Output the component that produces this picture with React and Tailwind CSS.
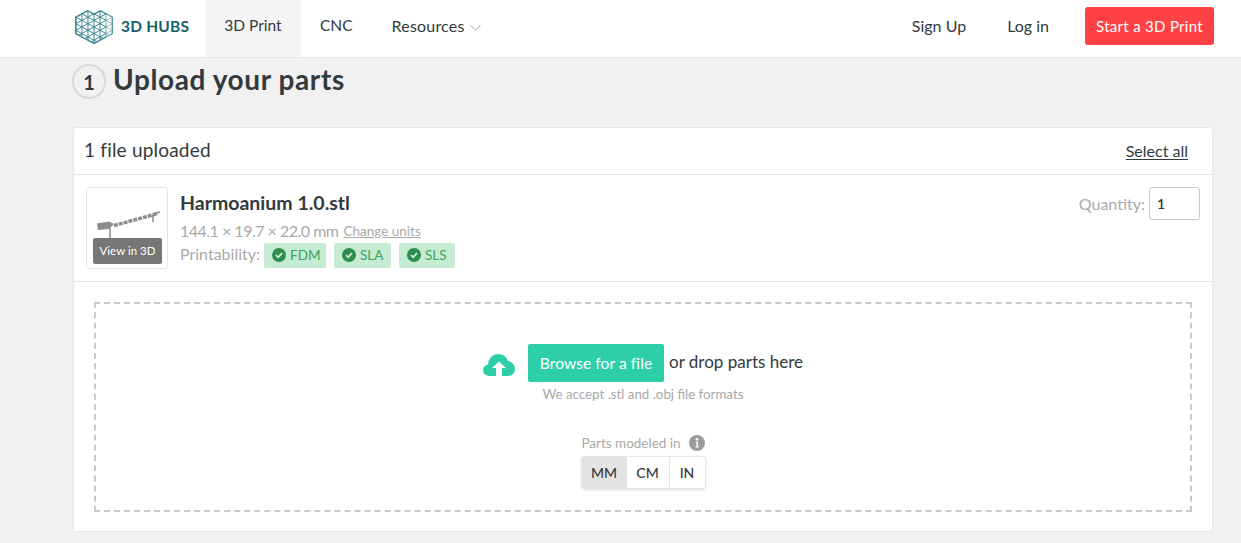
const font = { fontFamily: '"Lato", "Liberation Sans", sans-serif' };

// triangular lattice clipped to the two-lobed hexagon of the mark
function Logo() {
  const outline = "M0.8 7.5L12.7 0.8L19 4.4L25.3 0.8L37.2 7.5V25L19 35.4L0.8 25Z";
  const verticals = [0, 1, 2, 3, 4, 5, 6].map((i) => `M${0.8 + i * 6.07} 0V36`);
  const diagonals = [];
  for (let c = -28; c < 42; c += 7) {
    diagonals.push(`M0 ${c}L38 ${c + 21.9}`);
    diagonals.push(`M0 ${c + 21.9}L38 ${c}`);
  }
  return (
    <svg width="38" height="34" viewBox="0 0 38 36" preserveAspectRatio="none" fill="none" stroke="#3a8791" strokeWidth="1">
      <clipPath id="hex">
        <path d={outline} />
      </clipPath>
      <g clipPath="url(#hex)">
        {verticals.concat(diagonals).map((d) => (
          <path key={d} d={d} />
        ))}
      </g>
      <path d={outline} strokeWidth="1.5" />
      <path d="M31 4V29L37.2 25V7.5Z" fill="#ffffff" fillOpacity="0.45" stroke="none" />
    </svg>
  );
}

function Badge({ label, className }) {
  return (
    <span className={`flex h-[25px] items-center gap-[4px] rounded-[2px] bg-[#c5ebd2] pl-2 text-[13.5px] text-[#3da15f] ${className}`}>
      <svg width="14" height="14" viewBox="0 0 14 14">
        <circle cx="7" cy="7" r="7" fill="#2d8f4e" />
        <path d="M4 7.200L6.200 9.300L10 5" fill="none" stroke="#d6f2e0" strokeWidth="1.800" />
      </svg>
      {label}
    </span>
  );
}

function Part() {
  return (
    <svg width="72" height="34" viewBox="0 0 72 34" fill="none" className="absolute left-[9px] top-[22px]">
      <path d="M18 15.500L62 3.500" stroke="#8c8c8c" strokeWidth="3.500" strokeDasharray="4 1" />
      <path d="M58 3.500L64 2" stroke="#8c8c8c" strokeWidth="1.500" />
      <path d="M1 13.500L13 11.500L18 14L13 19L2 20Z" fill="#8c8c8c" />
      <path d="M14 18V33M57 5V12" stroke="#8c8c8c" strokeWidth="1.500" />
    </svg>
  );
}

export default function App() {
  return (
    <div style={font} className="h-[543px] overflow-hidden bg-[#f1f1f1] text-[#333a3d]">
      <header className="flex h-[58px] border-b border-[#e6e6e6] bg-white pl-[75px] pr-[27px]">
        <div className="flex w-[130px] items-center gap-[8px] pb-[4px]">
          <Logo />
          <span className="text-[15.5px] font-bold tracking-[0.2px] text-[#13606b]">3D HUBS</span>
        </div>
        <nav className="flex text-[15.5px]">
          <a className="flex w-[96px] items-center justify-center bg-[#f5f5f5] pb-[5px]">3D Print</a>
          <a className="ml-[19px] flex items-center pb-[5px]">CNC</a>
          <a className="ml-[39px] flex items-center pb-[5px] text-[16px] tracking-[0.2px]">
            Resources
            <svg width="11" height="6" viewBox="0 0 11 6" fill="none" stroke="#a8a8a8" className="ml-[5px] mt-[3px]">
              <path d="M0.5 0.5L5.5 5L10.5 0.5" />
            </svg>
          </a>
        </nav>
        <div className="ml-auto flex items-center pb-[5px] text-[16px]">
          <a>Sign Up</a>
          <a className="ml-[41px]">Log in</a>
          <a className="ml-[36px] flex h-[38px] w-[129px] items-center justify-center rounded-[3px] bg-[#ff4146] text-[15px] tracking-[0.3px] text-white">
            Start a 3D Print
          </a>
        </div>
      </header>

      <main className="ml-[72px] w-[1141px]">
        <div className="flex h-[69px] items-start pt-[6px]">
          <span className="flex h-[35px] w-[34px] items-center justify-center rounded-full border-2 border-[#d9d9d9] text-[20px] font-bold">1</span>
          <h1 className="ml-[7px] text-[28px] font-bold leading-[31px] tracking-[0.6px]">Upload your parts</h1>
        </div>

        <section className="ml-px h-[405px] rounded-[3px] border border-[#e6e6e6] bg-white">
          <div className="flex h-[47px] items-center justify-between border-b border-[#e4e4e4] pl-[10px] pr-[24px]">
            <span className="mb-[2px] text-[19px] tracking-[0.2px]">1 file uploaded</span>
            <a className="text-[16px] underline underline-offset-2">Select all</a>
          </div>

          <div className="flex h-[107px] border-b border-[#e4e4e4] pl-[12px] pr-[12px] pt-[12px]">
            <div className="relative h-[82px] w-[82px] rounded-[3px] border border-[#e4e4e4]">
              <Part />
              <span className="absolute bottom-[4px] left-[6px] flex h-[26px] w-[69px] items-center justify-center rounded-[2px] bg-[#767676] text-[11.5px] text-white">
                View in 3D
              </span>
            </div>
            <div className="ml-[12px] flex flex-col">
              <h2 className="text-[19.5px] font-bold leading-[32px]">Harmoanium 1.0.stl</h2>
              <p className="flex h-[23px] items-center text-[#a9a9a9]">
                <span className="text-[16px] tracking-[-0.5px]">144.1 × 19.7 × 22.0 mm</span>
                <a className="ml-[5px] mt-[1px] text-[13.5px] underline">Change units</a>
              </p>
              <div className="flex items-center text-[#a9a9a9]">
                <span className="mb-[2px] text-[16px]">Printability:</span>
                <Badge label="FDM" className="ml-[4px] w-[62px]" />
                <Badge label="SLA" className="ml-[8px] w-[57px]" />
                <Badge label="SLS" className="ml-[8px] w-[56px]" />
              </div>
            </div>
            <div className="ml-auto flex h-[33px] items-center">
              <span className="text-[16px] text-[#a9a9a9]">Quantity:</span>
              <input
                readOnly
                value="1"
                className="ml-[4px] h-[33px] w-[51px] rounded-[3px] border border-[#c9c9c9] pl-[7px] text-[14px] font-semibold text-[#333a3d]"
              />
            </div>
          </div>

          <div className="mx-[20px] mt-[20px] flex h-[210px] flex-col items-center border-2 border-dashed border-[#c9c9c9] pt-[40px]">
            <div className="flex items-center">
              <svg width="32" height="24" viewBox="0 0 32 24" className="mr-[13px] mt-[3px]">
                <path d="M7 23C3 23 0 20.500 0 17C0 14 2 12 5 11.500C5.500 5 10 1 15.500 1C20 1 23.500 4 25 8C29 8.500 32 12 32 16C32 20 29 23 25 23H19V15H23L16 8.500L9 15H13V23Z" fill="#2dcfa9" />
              </svg>
              <a className="flex h-[38px] w-[136px] items-center justify-center rounded-[2px] bg-[#2dcfa9] pt-[2px] text-[15.5px] tracking-[0.1px] text-white">
                Browse for a file
              </a>
              <span className="mb-[3px] ml-[5px] text-[17px]">or drop parts here</span>
            </div>
            <p className="mt-[3px] text-[13.3px] text-[#a9a9a9]">We accept .stl and .obj file formats</p>
            <div className="mt-[28px] flex items-center text-[13.5px] text-[#a9a9a9]">
              Parts modeled in
              <svg width="16" height="16" viewBox="0 0 16 16" className="ml-[8px]">
                <circle cx="8" cy="8" r="8" fill="#9b9b9b" />
                <path d="M6.500 6.500H9V11.500H10V12.500H6.500V11.500H7.500V7.500H6.500Z" fill="#fff" />
                <circle cx="8" cy="4.300" r="1.300" fill="#fff" />
              </svg>
            </div>
            <div className="mt-[3px] flex h-[33px] rounded-[3px] border border-[#e6e6e6] text-[14px] font-medium shadow-sm">
              <span className="flex w-[45px] items-center justify-center bg-[#e3e3e3]">MM</span>
              <span className="flex w-[43px] items-center justify-center border-r border-[#e6e6e6]">CM</span>
              <span className="flex w-[35px] items-center justify-center">IN</span>
            </div>
          </div>
        </section>
      </main>
    </div>
  );
}
